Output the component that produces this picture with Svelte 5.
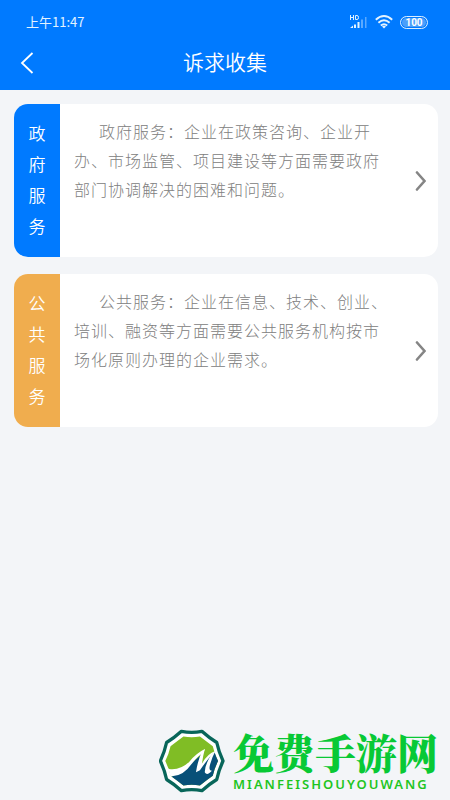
<script>
  const services = [
    {
      name: '政府服务',
      tone: 'blue',
      text: '政府服务：企业在政策咨询、企业开办、市场监管、项目建设等方面需要政府部门协调解决的困难和问题。'
    },
    {
      name: '公共服务',
      tone: 'orange',
      text: '公共服务：企业在信息、技术、创业、培训、融资等方面需要公共服务机构按市场化原则办理的企业需求。'
    }
  ];
</script>

<div class="page">
  <header>
    <div class="status">
      <span class="time">上午11:47</span>
      <div class="indicators">
        <svg width="19" height="16" viewBox="0 0 19 16" aria-label="HD">
          <g fill="none" stroke="#dff0ff" stroke-width="1">
            <path d="M1.500 1v5M4.500 1v5M1.500 3.500h3M6.500 1.500h1.500q1.500 0 1.500 2t-1.500 2h-1.500z" />
          </g>
          <g fill="#e4f3ff">
            <path d="M1 14l3-2.500V14zM5 10.500h2V14H5zM8.500 8h2v6h-2z" />
            <path d="M12 5.500h2V14h-2zM16 3h1.500v11H16z" opacity=".4" />
          </g>
        </svg>
        <svg width="18" height="14" viewBox="0 0 18 14" aria-label="Wi-Fi">
          <g fill="none" stroke="#e4f3ff" stroke-width="1.900">
            <path d="M.8 4.800Q9-2.600 17.200 4.800M3.400 7.800Q9 2.800 14.600 7.800M5.800 10.500Q9 7.800 12.200 10.500" />
          </g>
          <path d="M7 11.400Q9 10 11 11.400L9 13.500z" fill="#e4f3ff" />
        </svg>
        <span class="battery">100</span>
      </div>
    </div>
    <div class="bar">
      <button class="back" aria-label="返回">
        <svg width="14" height="22" viewBox="0 0 14 22">
          <path d="M12.500 1L2 11l10.500 10" fill="none" stroke="#fff" stroke-width="1.800" />
        </svg>
      </button>
      <h1>诉求收集</h1>
    </div>
  </header>

  <main>
    {#each services as service}
      <a class="card" href="#{service.tone}">
        <span class="tab {service.tone}"><span class="name">{service.name}</span></span>
        <span class="text">{service.text}</span>
        <svg class="go" width="12" height="20" viewBox="0 0 12 20">
          <path d="M2 1.500L9.500 10 2 18.500" fill="none" stroke="#858585" stroke-width="2.600" stroke-linecap="round" />
        </svg>
      </a>
    {/each}
  </main>

  <footer>
    <svg width="66" height="66" viewBox="28 22 200 200" aria-hidden="true">
      <path d="M158 32Q180 52 203 66Q209 94 222 122Q209 150 203 178Q180 192 158 212Q127 206 96 212Q74 192 51 178Q45 150 32 122Q45 94 51 66Q74 52 96 32Q127 38 158 32z" fill="#fff" stroke="#08665a" stroke-width="10" stroke-linejoin="round" />
      <path d="M152 48Q173 64 191 77Q196 100 207 122Q196 144 191 167Q173 180 152 196Q127 192 102 196Q81 180 63 167Q58 144 47 122Q58 100 63 77Q81 64 102 48Q127 52 152 48z" fill="#80bd25" />
      <path d="M197 97Q201 110 207 122Q196 144 191 167Q173 180 152 196Q127 192 102 196Q81 180 66 169L84 160Q104 150 124 130L160 100L154 138L190 98z" fill="#075078" />
      <g fill="#fff">
        <path d="M46 136Q54 149 68 147Q98 146 120 124Q142 98 167 86L163 96Q144 108 126 132Q100 170 64 168Q54 163 60 155Q49 150 46 136z" />
        <path d="M167 86Q162 104 158 130Q175 100 199 92Q178 112 152 150L140 156Q146 118 158 94z" />
        <path d="M199 92Q188 112 182 136Q178 153 189 151Q174 168 167 157Q165 140 184 106z" />
      </g>
    </svg>
    <div class="brand">
      <strong>免费手游网</strong>
      <span>MIANFEISHOUYOUWANG</span>
    </div>
  </footer>
</div>

<style>
  :global(body) {
    margin: 0;
    background: #f3f5f8;
  }
  .page {
    min-height: 100vh;
    display: flex;
    flex-direction: column;
    font-family: "Noto Sans CJK SC", "Noto Sans", sans-serif;
  }
  header {
    background: #007aff;
    color: #fff;
  }
  .status {
    height: 36px;
    padding: 8px 22px 0 26px;
    box-sizing: border-box;
    display: flex;
    align-items: center;
    justify-content: space-between;
    font-size: 13px;
    line-height: 20px;
    color: #e4f3ff;
  }
  .indicators {
    display: flex;
    align-items: center;
    gap: 7px;
  }
  .battery {
    width: 28px;
    height: 13px;
    box-sizing: border-box;
    border: 1px solid #d9edff;
    border-radius: 7px;
    background: #4b9ffb;
    box-shadow: inset 0 0 0 1px #007aff;
    font: bold 10px/11px Roboto, sans-serif;
    text-align: center;
    color: #fff;
  }
  .bar {
    height: 54px;
    display: grid;
    grid-template-columns: 54px 1fr 54px;
    align-items: center;
  }
  .back {
    height: 54px;
    padding: 0 0 0 20px;
    border: 0;
    background: none;
    display: flex;
    align-items: center;
  }
  h1 {
    margin: 0;
    font-size: 21px;
    font-weight: 350;
    line-height: 32px;
    padding-bottom: 4px;
    text-align: center;
  }
  main {
    padding: 14px 12px 14px 14px;
    display: flex;
    flex-direction: column;
    gap: 17px;
  }
  .card {
    display: flex;
    align-items: center;
    min-height: 153px;
    border-radius: 14px;
    overflow: hidden;
    background: #fff;
    color: #808080;
    text-decoration: none;
  }
  .tab {
    width: 46px;
    padding-bottom: 4px;
    box-sizing: border-box;
    flex: none;
    align-self: stretch;
    display: flex;
    align-items: center;
    justify-content: center;
    color: #fff;
    font-size: 17px;
    font-weight: 350;
    line-height: 31px;
  }
  .name {
    width: 17px;
  }
  .blue {
    background: #007aff;
  }
  .orange {
    background: #f0ad4e;
  }
  .text {
    flex: 1;
    align-self: flex-start;
    padding: 13px 24px 14px 14px;
    font-size: 16px;
    font-weight: 300;
    line-height: 29px;
    letter-spacing: 1px;
    text-indent: 25px;
  }
  .go {
    flex: none;
    margin-right: 11px;
  }
  footer {
    margin-top: auto;
    padding: 0 12px 6px;
    display: flex;
    justify-content: flex-end;
    align-items: center;
    gap: 8px;
  }
  .brand {
    display: flex;
    flex-direction: column;
    color: #08c935;
  }
  .brand strong {
    font: 900 41px/46px "Noto Serif CJK SC", "Noto Sans CJK SC", serif;
  }
  .brand span {
    font-family: "Noto Sans", sans-serif;
    font-size: 13px;
    font-weight: 600;
    line-height: 18px;
    letter-spacing: 2px;
    color: #1fc51f;
  }
</style>
